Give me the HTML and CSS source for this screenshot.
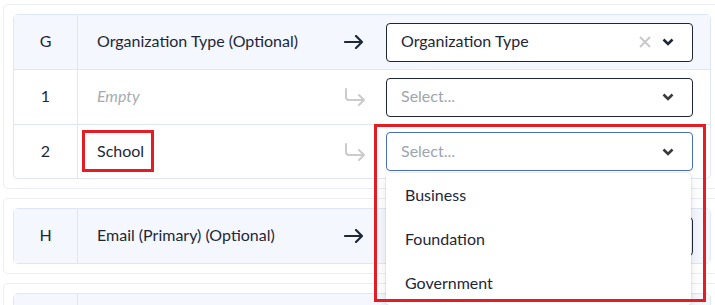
FILE: index.html
```html
<!DOCTYPE html>
<html lang="en">

<head>
    <meta charset="UTF-8">
    <meta name="viewport" content="width=device-width, initial-scale=1.0">
    <title>Column mapping</title>
    <link rel="stylesheet" href="styles.css">
</head>

<body>
    <div class="page">
        <div class="card">
            <div class="grid">
                <div class="row head">
                    <div class="col-key">G</div>
                    <div class="col-label">Organization Type (Optional)</div>
                    <div class="col-arrow">
                        <svg width="20" height="14" viewBox="0 0 20 14"><path d="M1 7h17M12 1l6 6-6 6" fill="none" stroke="#1d2738" stroke-width="2.2" stroke-linecap="round" stroke-linejoin="round"/></svg>
                    </div>
                    <div class="col-select">
                        <div class="select">
                            <span class="value">Organization Type</span>
                            <svg class="clear" width="12" height="12" viewBox="0 0 12 12"><path d="M1 1l10 10M11 1L1 11" stroke="#c9c9c9" stroke-width="2"/></svg>
                            <svg class="chev" width="12" height="8" viewBox="0 0 12 8"><path d="M1.5 1.5l4.5 4.5 4.5-4.5" fill="none" stroke="#1d2738" stroke-width="2.6"/></svg>
                        </div>
                    </div>
                </div>
                <div class="row">
                    <div class="col-key">1</div>
                    <div class="col-label empty">Empty</div>
                    <div class="col-arrow">
                        <svg width="24" height="20" viewBox="0 0 24 20"><path d="M2 2v8a3 3 0 0 0 3 3h15M15 8l5 5-5 5" fill="none" stroke="#cbcbcb" stroke-width="2" stroke-linecap="round" stroke-linejoin="round"/></svg>
                    </div>
                    <div class="col-select">
                        <div class="select">
                            <span class="value placeholder">Select...</span>
                            <svg class="chev" width="12" height="8" viewBox="0 0 12 8"><path d="M1.5 1.5l4.5 4.5 4.5-4.5" fill="none" stroke="#3a3a3a" stroke-width="2.6"/></svg>
                        </div>
                    </div>
                </div>
                <div class="row">
                    <div class="col-key">2</div>
                    <div class="col-label">School</div>
                    <div class="col-arrow">
                        <svg width="24" height="20" viewBox="0 0 24 20"><path d="M2 2v8a3 3 0 0 0 3 3h15M15 8l5 5-5 5" fill="none" stroke="#cbcbcb" stroke-width="2" stroke-linecap="round" stroke-linejoin="round"/></svg>
                    </div>
                    <div class="col-select">
                        <div class="select focused">
                            <span class="value placeholder">Select...</span>
                            <svg class="chev" width="12" height="8" viewBox="0 0 12 8"><path d="M1.5 1.5l4.5 4.5 4.5-4.5" fill="none" stroke="#3a3a3a" stroke-width="2.6"/></svg>
                        </div>
                        <div class="menu">
                            <div class="option">Business</div>
                            <div class="option">Foundation</div>
                            <div class="option">Government</div>
                        </div>
                    </div>
                </div>
            </div>
        </div>

        <div class="card">
            <div class="grid">
                <div class="row head">
                    <div class="col-key">H</div>
                    <div class="col-label">Email (Primary) (Optional)</div>
                    <div class="col-arrow">
                        <svg width="20" height="14" viewBox="0 0 20 14"><path d="M1 7h17M12 1l6 6-6 6" fill="none" stroke="#1d2738" stroke-width="2.2" stroke-linecap="round" stroke-linejoin="round"/></svg>
                    </div>
                    <div class="col-select">
                        <div class="select"></div>
                    </div>
                </div>
            </div>
        </div>

        <div class="card">
            <div class="grid">
                <div class="row head">
                    <div class="col-key"></div>
                    <div class="col-label"></div>
                    <div class="col-arrow"></div>
                    <div class="col-select"></div>
                </div>
            </div>
        </div>

        <!-- annotation boxes -->
        <div class="mark mark-school"></div>
        <div class="mark mark-menu"></div>
    </div>
</body>

</html>
```

FILE: styles.css
```css
html,
body {
    margin: 0;
    padding: 0;
    background-color: #fff;
    overflow: hidden;
}

.page {
    position: relative;
    height: 305px;
    padding: 4px 0 0 3px;
    box-sizing: border-box;
    overflow: hidden;
    font-family: Lato, "Open Sans", sans-serif;
    font-size: 16px;
    color: #1d2738;
}

.card {
    width: 718px;
    box-sizing: border-box;
    border: 1px solid #eceef1;
    border-radius: 5px;
    padding: 9px;
    margin-bottom: 9px;
}

.grid {
    border: 1px solid #dde7f6;
    border-radius: 5px;
}

.row {
    display: grid;
    grid-template-columns: 64px 266px 42px 307px;
    height: 54px;
    border-top: 1px solid #dde7f6;
    position: relative;
}

.row:first-child {
    border-top: 0;
}

.row:nth-child(3) {
    height: 53px;
}

.row.head {
    background-color: #f4f7fe;
}

.col-key {
    display: flex;
    align-items: center;
    justify-content: center;
    border-right: 1px solid #dde7f6;
    padding-bottom: 3px;
}

.col-label {
    display: flex;
    align-items: center;
    padding-left: 19px;
    padding-bottom: 3px;
}

.col-label.empty {
    font-style: italic;
    color: #a6abb2;
}

.col-arrow {
    display: flex;
    align-items: center;
}

.col-select {
    display: flex;
    align-items: center;
    position: relative;
}

.select {
    flex: 1;
    height: 39px;
    box-sizing: border-box;
    border: 1px solid #1d2738;
    border-radius: 4px;
    background-color: #fff;
    display: flex;
    align-items: center;
    padding: 0 18px 0 14px;
}

.select.focused {
    border-color: #4a6fb5;
}

.select .value {
    flex: 1;
    padding-bottom: 3px;
}

.select .placeholder {
    color: #9ea5ae;
}

.select .clear {
    margin-right: 11px;
}

.menu {
    position: absolute;
    top: 48px;
    left: 0;
    width: 305px;
    background-color: #fff;
    border-radius: 4px;
    box-shadow: 0 0 0 1px rgba(0, 0, 0, 0.05), 0 4px 11px rgba(0, 0, 0, 0.1);
    z-index: 5;
}

.option {
    height: 44px;
    line-height: 44px;
    padding-left: 19px;
}

.mark {
    position: absolute;
    border: 3px solid #e41d24;
    z-index: 10;
}

.mark-school {
    left: 82px;
    top: 130px;
    width: 66px;
    height: 36px;
}

.mark-menu {
    left: 374px;
    top: 124px;
    width: 326px;
    height: 172px;
}
```
